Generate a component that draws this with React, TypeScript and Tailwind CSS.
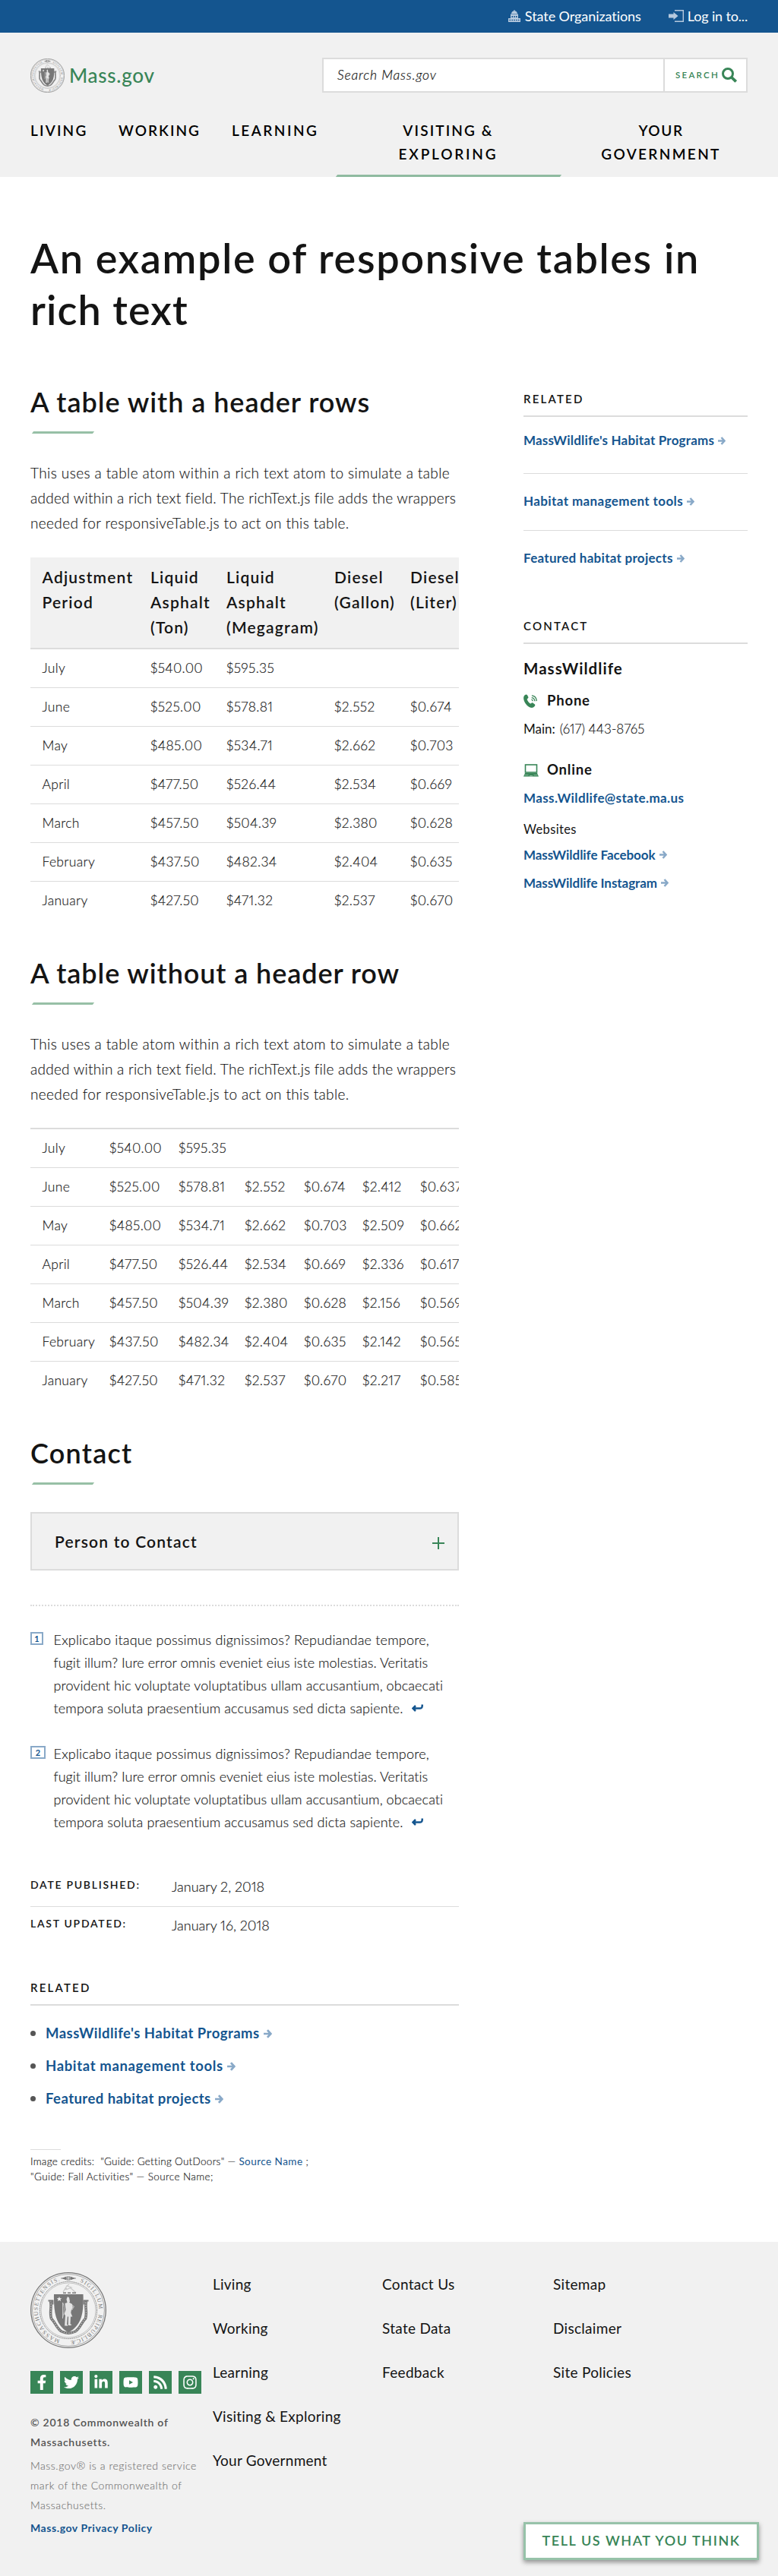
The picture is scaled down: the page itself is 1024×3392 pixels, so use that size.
import type { ReactNode } from 'react';
import { FaFacebookF, FaTwitter, FaLinkedinIn, FaYoutube, FaRss, FaInstagram } from 'react-icons/fa';

/* ---------- icons ---------- */

function Seal({ className, id }: { className: string; id: string }) {
  return (
    <svg viewBox="0 0 100 100" className={className} fill="none" stroke="#777">
      <defs>
        <path id={id} d="M50 90.3A40.3 40.3 0 0 1 50 9.7A40.3 40.3 0 0 1 50 90.3" />
      </defs>
      <circle cx="50" cy="50" r="49.3" strokeWidth="1.3" />
      <circle cx="50" cy="50" r="47.4" strokeWidth="0.6" />
      <circle cx="50" cy="50" r="37.6" strokeWidth="1" strokeDasharray="1 0.6" />
      <circle cx="50" cy="50" r="36" strokeWidth="0.4" />
      <g fill="#777" stroke="none" className="font-['Liberation_Serif'] text-[7.6px]">
        <text>
          <textPath href={`#${id}`} startOffset="11" textLength="104" lengthAdjust="spacing">MASSACHUSETTENSIS.</textPath>
        </text>
        <text>
          <textPath href={`#${id}`} startOffset="142" textLength="46" lengthAdjust="spacing">SIGILLUM</textPath>
        </text>
        <text>
          <textPath href={`#${id}`} startOffset="195" textLength="55" lengthAdjust="spacing">REIPUBLICÆ</textPath>
        </text>
        <path d="M41 8l6-2.2v4.4zM59 8l-6-2.2v4.4z" />
      </g>
      <rect x="48" y="6" width="4" height="4" strokeWidth="1" />
      <path d="M40 8h20" strokeWidth="0.8" />
      <g stroke="#c9c9c9" strokeWidth="1.2">
        <path d="M43 26l5-8 6 2-7 3M48 18l3-2M52 20l8 7M44 24l4-3" />
      </g>
      <path d="M43 27.2h4M49 27.2h4M55 27.2h5" strokeWidth="1.4" />
      <path d="M31 29h38.500c1 26-2.500 41-19.500 50.500C34 70 30.500 55 31 29z" fill="#777" stroke="none" />
      <path d="M26.500 38c2 8-1.500 14 1 23 6 6 7 13 13.500 17 6 3 12 3 18 0 6.500-4 7.500-11 13.500-17 2.500-9-1-15 1-23" strokeWidth="3.600" />
      <path d="M26.500 38c2 8-1.500 14 1 23 6 6 7 13 13.500 17 6 3 12 3 18 0 6.500-4 7.500-11 13.500-17 2.500-9-1-15 1-23" stroke="#c4c4c4" strokeWidth="1.200" strokeDasharray="1.400 1.800" />
      <path d="M23.500 37.500h6v5M76.500 37.500h-6v5" strokeWidth="1.800" />
      <path d="M38 32l.9 2.200 2.400.1-1.900 1.500.7 2.400-2.100-1.400-2.100 1.400.7-2.400-1.900-1.500 2.400-.1z" fill="#f1f1f1" stroke="none" />
      <g fill="#e4e4e4" stroke="none">
        <path d="M47.500 35.500l1.500-3.500 2 1.500 1 5-1 1.500h-2.500zM45.500 41l3-1h3l3.500 2 .8 4.500-2 3.500-.5 3.500 2 5h-2.300l-.5 10h1.300v1.500h-4v-1.500l.3-10h-1.300l-.8 10.500h1v1.500h-3.800v-1.500l.8-12-1.500-2 2-5.500z" />
      </g>
      <path d="M42.500 40v21M42.500 40c3 5 2 12 0 20M54 43l3.500 2-3 5" stroke="#d8d8d8" strokeWidth="0.800" />
    </svg>
  );
}

function CapitolIcon() {
  return (
    <svg viewBox="0 0 16 16" className="h-4 w-4" fill="#b5c9de">
      <path d="M7.500 0h1v1.300c2 .4 3.300 2 3.500 3.700H4c.2-1.700 1.500-3.300 3.500-3.700zM3 5.500h10V7H3zM0 11h16v5H0z" />
      <path d="M3 7h10v4H3z" />
      <path d="M4.500 8h1.500v2H4.500zM7.300 8h1.500v2H7.300zM10 8h1.500v2H10zM1.500 12.700H3v1.600H1.500zM4.400 12.700h1.500v1.600H4.400zM7.300 12.700h1.500v1.600H7.300zM10.200 12.700h1.500v1.600h-1.500zM13 12.700h1.500v1.600H13z" fill="#14558f" />
    </svg>
  );
}

function LoginIcon() {
  return (
    <svg viewBox="0 0 20 16" className="h-4 w-5" fill="none">
      <path d="M8 .7h11.300v14.600H8" stroke="#b5c9de" strokeWidth="1.400" />
      <path d="M0 5.500h6.500V3l6 5-6 5v-2.500H0z" fill="#b5c9de" />
    </svg>
  );
}

function Magnifier() {
  return (
    <svg viewBox="0 0 20 20" className="h-5 w-5" fill="none" stroke="#388557">
      <circle cx="8" cy="8" r="6.500" strokeWidth="3" />
      <path d="M12.500 12.500l6.200 6" strokeWidth="3.800" />
    </svg>
  );
}

function PhoneIcon() {
  return (
    <svg viewBox="0 0 18 19" className="h-[19px] w-[18px]" fill="#388557">
      <path d="M1.800 1.200C3 .2 4.300.2 5 1.200l1.300 2.500c.4 1-.1 1.700-1.100 2.400-.6.500-.5 1-.2 1.700.8 1.800 2 3.300 3.600 4.400.6.4 1.100.4 1.600-.1.800-.8 1.500-1 2.400-.4l2 1.500c1 .8.900 1.700 0 2.900-1.500 2-3.600 2.500-6 1.500C4.700 15.900.8 11.100.2 6.300 0 4.200.3 2.400 1.800 1.200z" />
      <g fill="none" stroke="#388557" strokeWidth="1.300">
        <path d="M10.500 7.200c1.100.3 1.700 1 1.800 2.100M10.700 4.600c2.500.4 4 2 4.200 4.600M10.900 1.900c4 .5 6.200 3.100 6.400 7.200" />
      </g>
    </svg>
  );
}

function LaptopIcon() {
  return (
    <svg viewBox="0 0 20 17" className="h-[17px] w-5">
      <rect x="2.500" y="1" width="15" height="10" fill="none" stroke="#388557" strokeWidth="1.600" />
      <path d="M2 12h16l2 4.600H0z" fill="#388557" />
      <path d="M1.500 14.600h5M13.500 14.600h5M8 15.500h4" stroke="#9fc7ae" strokeWidth="0.800" />
    </svg>
  );
}

function Arrow({ className = 'h-[11px] w-[10px]' }: { className?: string }) {
  return (
    <svg viewBox="0 0 10 11" className={`ml-[5px] shrink-0 ${className}`} fill="none" stroke="#89a9c8" strokeWidth="2.500">
      <path d="M0 5.500h8M4.500 1l4 4.500-4 4.500" />
    </svg>
  );
}

function ReturnArrow() {
  return (
    <svg viewBox="0 0 15 10" className="ml-[11px] h-[10px] w-[15px]" fill="none" stroke="#14558f" strokeWidth="2.500">
      <path d="M1.500 5.500h9.500c2 0 3-1.500 2.700-5M5 2L1.500 5.500 5 9" />
    </svg>
  );
}

/* ---------- shared pieces ---------- */

function SectionHeading({ children, className }: { children: ReactNode; className: string }) {
  return (
    <div>
      <h2 className={`h-11 whitespace-nowrap text-[36px] font-semibold leading-[44px] ${className}`}>{children}</h2>
      <div className="ml-[3px] mt-[17px] h-[3px] w-20 -skew-x-[35deg] bg-[#97c0a6]" />
    </div>
  );
}

function Intro() {
  return (
    <p className="mt-[35px] whitespace-nowrap text-[19px] font-light leading-[33px] [-webkit-text-stroke:0.15px]">
      <span className="block tracking-[0.41px]">This uses a table atom within a rich text atom to simulate a table</span>
      <span className="block tracking-[0.25px]">added within a rich text field. The richText.js file adds the wrappers</span>
      <span className="block tracking-[0.36px]">needed for responsiveTable.js to act on this table.</span>
    </p>
  );
}

function SmallHeading({ children }: { children: ReactNode }) {
  return (
    <h3 className="h-[34px] border-b-2 border-[#dcdcdc] text-[15px] font-semibold uppercase leading-5 tracking-[2.2px]">{children}</h3>
  );
}

const headers = [['Adjustment', 'Period'], ['Liquid', 'Asphalt', '(Ton)'], ['Liquid', 'Asphalt', '(Megagram)'], ['Diesel', '(Gallon)'], ['Diesel', '(Liter)']];

const prices = [
  ['July', '$540.00', '$595.35', '', '', '', ''],
  ['June', '$525.00', '$578.81', '$2.552', '$0.674', '$2.412', '$0.637'],
  ['May', '$485.00', '$534.71', '$2.662', '$0.703', '$2.509', '$0.662'],
  ['April', '$477.50', '$526.44', '$2.534', '$0.669', '$2.336', '$0.617'],
  ['March', '$457.50', '$504.39', '$2.380', '$0.628', '$2.156', '$0.569'],
  ['February', '$437.50', '$482.34', '$2.404', '$0.635', '$2.142', '$0.565'],
  ['January', '$427.50', '$471.32', '$2.537', '$0.670', '$2.217', '$0.585'],
];

function PriceRows({ columns }: { columns: number }) {
  return (
    <tbody className="text-[17.5px] font-light leading-6 tracking-[0.3px] proportional-nums [-webkit-text-stroke:0.15px]">
      {prices.map((row) => (
        <tr key={row[0]} className="group">
          {row.slice(0, columns).map((cell, i) => (
            <td key={i} className="h-[51px] border-b border-[#dcdcdc] p-0 pb-px first:pl-[15.5px] group-last:border-transparent">{cell}</td>
          ))}
        </tr>
      ))}
    </tbody>
  );
}

function Footnote({ n, className }: { n: number; className: string }) {
  return (
    <li className="flex">
      <div className="w-[30.5px] shrink-0 pt-[5px]">
        <span className={`flex h-[17px] items-center justify-center border-2 border-[#89a9c8] text-[11px] font-bold leading-none text-[#14558f] ${className}`}>{n}</span>
      </div>
      <p className="whitespace-nowrap text-[18px] font-light leading-[30px] [-webkit-text-stroke:0.15px]">
        <span className="block tracking-[0.19px]">Explicabo itaque possimus dignissimos? Repudiandae tempore,</span>
        <span className="block tracking-[0.04px]">fugit illum? Iure error omnis eveniet eius iste molestias. Veritatis</span>
        <span className="block tracking-[0.08px]">provident hic voluptate voluptatibus ullam accusantium, obcaecati</span>
        <span className="flex items-center tracking-[0.12px]">tempora soluta praesentium accusamus sed dicta sapiente.<ReturnArrow /></span>
      </p>
    </li>
  );
}

const socials = [FaFacebookF, FaTwitter, FaLinkedinIn, FaYoutube, FaRss, FaInstagram];

/* ---------- page ---------- */

export default function App() {
  return (
    <div className="relative h-[3392px] w-[1024px] overflow-hidden bg-white font-['Lato',sans-serif] text-[#141414]">
      <div className="flex h-[43px] items-center justify-end bg-[#14558f] pb-px text-[18px] text-white">
        <CapitolIcon />
        <span className="ml-1.5 w-[189px] whitespace-nowrap tracking-[-0.07px]">State Organizations</span>
        <LoginIcon />
        <span className="ml-[5px] mr-10 whitespace-nowrap tracking-[-0.16px]">Log in to...</span>
      </div>

      <header className="h-[190px] bg-[#f1f1f1] px-10 pt-[33px]">
        <div className="flex h-[46px] items-center justify-between">
          <div className="flex items-center gap-1.5 text-[26px] font-medium tracking-[0.73px] text-[#388557]">
            <Seal className="h-[45px] w-[45px]" id="seal-header" />
            <span>Mass.gov</span>
          </div>
          <div className="flex h-[46px] w-[560px] border-2 border-[#dcdcdc] bg-white">
            <div className="flex flex-1 items-center pl-[18px] text-[17.5px] font-light italic tracking-[0.85px] [-webkit-text-stroke:0.2px]">Search Mass.gov</div>
            <div className="flex w-[109px] items-center border-l-2 border-[#dcdcdc] pl-3.5 text-[11.5px] font-semibold tracking-[2.27px] text-[#388557]">
              SEARCH
              <span className="ml-[3px]"><Magnifier /></span>
            </div>
          </div>
        </div>
        <nav className="mt-[34px] grid h-[77px] grid-cols-[116px_149px_137px_296px_246px] text-[19px] font-semibold uppercase leading-[31px] text-black">
          <a className="tracking-[2.2px]">Living</a>
          <a className="tracking-[2.05px]">Working</a>
          <a className="tracking-[2.5px]">Learning</a>
          <a className="flex h-[77px] flex-col items-center justify-between text-center">
            <span>
              <span className="block tracking-[2.13px]">Visiting &amp;</span>
              <span className="block tracking-[2.8px]">Exploring</span>
            </span>
            <span className="h-[3px] w-[295px] -skew-x-[35deg] bg-[#8fbaa0]" />
          </a>
          <a className="pl-[18px] text-center">
            <span className="block tracking-[1.61px]">Your</span>
            <span className="block tracking-[2.35px]">Government</span>
          </a>
        </nav>
      </header>

      <h1 className="ml-10 mt-[73px] h-[136px] whitespace-nowrap text-[54px] font-semibold leading-[68px]">
        <span className="block tracking-[1.64px]">An example of responsive tables in</span>
        <span className="block tracking-[1.08px]">rich text</span>
      </h1>

      <div className="mx-10 flex justify-between">
        <main className="w-[564px] pt-[65px]">
          <SectionHeading className="tracking-[0.95px]">A table with a header rows</SectionHeading>
          <Intro />
          <div className="mt-[29px] h-[478px] overflow-hidden">
            <table className="w-[642px] table-fixed border-separate border-spacing-0">
              <colgroup>
                <col className="w-[158px]" /><col className="w-[100px]" /><col className="w-[142px]" /><col className="w-[100px]" /><col className="w-[142px]" />
              </colgroup>
              <thead>
                <tr className="bg-[#f1f1f1] text-left align-top text-[21px] leading-[33px] tracking-[1.2px]">
                  {headers.map((lines, i) => (
                    <th key={i} className="h-[121px] border-b-2 border-[#dcdcdc] p-0 pt-[9px] font-semibold first:pl-[15.5px]">
                      {lines.map((line) => (
                        <span key={line} className="block">{line}</span>
                      ))}
                    </th>
                  ))}
                </tr>
              </thead>
              <PriceRows columns={5} />
            </table>
          </div>

          <div className="h-[47px]" />
          <SectionHeading className="tracking-[0.9px]">A table without a header row</SectionHeading>
          <Intro />
          <div className="mt-[28px] h-[359px] overflow-hidden border-t-2 border-[#dcdcdc]">
            <table className="w-[589px] table-fixed border-separate border-spacing-0">
              <colgroup>
                <col className="w-[104px]" /><col className="w-[91px]" /><col className="w-[87px]" /><col className="w-[78px]" /><col className="w-[77px]" /><col className="w-[76px]" /><col className="w-[76px]" />
              </colgroup>
              <PriceRows columns={7} />
            </table>
          </div>

          <div className="h-[47px]" />
          <SectionHeading className="tracking-[1.24px]">Contact</SectionHeading>
          <div className="mt-9 flex h-[77px] items-center justify-between border-2 border-[#dcdcdc] bg-[#f1f1f1] pl-[30px] pr-[17px]">
            <span className="text-[21px] font-semibold tracking-[1.2px]">Person to Contact</span>
            <svg viewBox="0 0 16 16" className="mt-1 h-4 w-4" stroke="#388557" strokeWidth="2"><path d="M8 0v16M0 8h16" /></svg>
          </div>
          <div className="mt-[45px] border-t-2 border-dotted border-[#dcdcdc]" />
          <ol className="mt-[29px] flex flex-col gap-[30px]">
            <Footnote n={1} className="w-[17px]" />
            <Footnote n={2} className="w-[20px]" />
          </ol>

          <dl className="mt-[46px]">
            <div className="flex h-[51px] border-b border-[#dcdcdc] pt-3">
              <dt className="w-[186px] text-[14px] font-semibold uppercase leading-5 tracking-[1.73px]">Date Published:</dt>
              <dd className="text-[18px] font-light leading-6 proportional-nums [-webkit-text-stroke:0.15px]">January 2, 2018</dd>
            </div>
            <div className="flex h-[51px] pt-3">
              <dt className="w-[186px] text-[14px] font-semibold uppercase leading-5 tracking-[1.73px]">Last Updated:</dt>
              <dd className="text-[18px] font-light leading-6 proportional-nums [-webkit-text-stroke:0.15px]">January 16, 2018</dd>
            </div>
          </dl>

          <section className="mt-[45px]">
            <SmallHeading>Related</SmallHeading>
            <ul className="mt-[15px] text-[18.5px] font-bold leading-[43px] text-[#14558f]">
              <li className="flex items-center tracking-[0.48px]"><span className="mr-[13px] h-[7px] w-[7px] rounded-full bg-[#555]" />MassWildlife's Habitat Programs<Arrow className="h-3 w-[11px]" /></li>
              <li className="flex items-center tracking-[0.65px]"><span className="mr-[13px] h-[7px] w-[7px] rounded-full bg-[#555]" />Habitat management tools<Arrow className="h-3 w-[11px]" /></li>
              <li className="flex items-center tracking-[0.45px]"><span className="mr-[13px] h-[7px] w-[7px] rounded-full bg-[#555]" />Featured habitat projects<Arrow className="h-3 w-[11px]" /></li>
            </ul>
          </section>

          <div className="mt-[45px] h-px w-10 bg-[#dcdcdc]" />
          <p className="mt-[5px] whitespace-nowrap text-[13.5px] font-light leading-5 [-webkit-text-stroke:0.15px]">
            <span className="block tracking-[0.29px]">Image credits:&nbsp; "Guide: Getting OutDoors" — <b className="tracking-[0.46px] text-[#14558f] [-webkit-text-stroke:0px]">Source Name</b> ;</span>
            <span className="block tracking-[0.4px]">"Guide: Fall Activities" — Source Name;</span>
          </p>
        </main>

        <aside className="w-[295px] pt-[73px]">
          <SmallHeading>Related</SmallHeading>
          <ul className="text-[17px] font-bold leading-6 text-[#14558f]">
            <li className="flex h-[75px] border-b border-[#dcdcdc] pt-[19px] tracking-[0.19px]">MassWildlife's Habitat Programs<Arrow className="mt-[7px] h-[11px] w-[10px]" /></li>
            <li className="flex h-[75px] border-b border-[#dcdcdc] pt-6 tracking-[0.4px]">Habitat management tools<Arrow className="mt-[7px] h-[11px] w-[10px]" /></li>
            <li className="flex h-[115px] pt-6 tracking-[0.28px]">Featured habitat projects<Arrow className="mt-[7px] h-[11px] w-[10px]" /></li>
          </ul>
          <SmallHeading>Contact</SmallHeading>
          <h4 className="mt-[18px] text-[20.5px] font-bold leading-7 tracking-[1.05px]">MassWildlife</h4>
          <h5 className="mt-[17px] flex h-6 items-center gap-[13px] text-[18.5px] font-bold tracking-[0.8px]"><PhoneIcon />Phone</h5>
          <p className="mt-[12.5px] h-6 whitespace-nowrap text-[17px] font-light leading-6"><span className="mr-1.5 font-normal">Main:</span><span className="proportional-nums tracking-[0.1px] [-webkit-text-stroke:0.15px]">(617) 443-8765</span></p>
          <h5 className="mt-[30.5px] flex h-6 items-center gap-[11px] text-[18.5px] font-bold tracking-[0.8px]"><LaptopIcon />Online</h5>
          <a className="mt-[13px] block text-[17px] font-bold leading-6 tracking-[0.37px] text-[#14558f]">Mass.Wildlife@state.ma.us</a>
          <p className="mt-[17px] text-[16.5px] leading-6 tracking-[0.35px]">Websites</p>
          <a className="mt-[9.5px] flex items-center text-[17px] font-bold leading-6 tracking-[-0.05px] text-[#14558f]">MassWildlife Facebook<Arrow /></a>
          <a className="mt-[13px] flex items-center text-[17px] font-bold leading-6 tracking-[-0.05px] text-[#14558f]">MassWildlife Instagram<Arrow /></a>
        </aside>
      </div>

      <footer className="absolute inset-x-0 bottom-0 flex h-[440px] bg-[#f1f1f1] pl-10">
        <div className="w-[240px] pt-10 text-[14px] leading-[26px]">
          <Seal className="h-[100px] w-[100px]" id="seal-footer" />
          <div className="mt-[30px] flex gap-[9px]">
            {socials.map((Icon, i) => (
              <span key={i} className="flex h-[30px] w-[30px] items-center justify-center bg-[#388557] text-[20px] text-white"><Icon /></span>
            ))}
          </div>
          <p className="mt-[25px] whitespace-nowrap font-semibold tracking-[0.74px] text-[#535353]">© 2018 Commonwealth of<br />Massachusetts.</p>
          <p className="mt-[5px] whitespace-nowrap font-light tracking-[0.55px] text-[#707070] [-webkit-text-stroke:0.1px]">Mass.gov® is a registered service<br />mark of the Commonwealth of<br />Massachusetts.</p>
          <p className="mt-1 font-bold tracking-[0.57px] text-[#14558f]">Mass.gov Privacy Policy</p>
        </div>
        <div className="grid grid-cols-[223px_225px_200px] pt-[27px] text-[19px] leading-[58px]">
          <div className="tracking-[0.25px]"><p>Living</p><p>Working</p><p>Learning</p><p>Visiting &amp; Exploring</p><p>Your Government</p></div>
          <div className="tracking-[0.3px]"><p>Contact Us</p><p>State Data</p><p>Feedback</p></div>
          <div className="tracking-[0.3px]"><p>Sitemap</p><p>Disclaimer</p><p>Site Policies</p></div>
        </div>
        <button className="absolute bottom-[21px] right-[25px] h-[50px] w-[310px] whitespace-nowrap border-[3px] border-[#97c2a9] bg-white pb-0.5 text-[18px] font-semibold tracking-[1.55px] text-[#388557] shadow-[0_3px_6px_rgba(0,0,0,0.4)]">
          TELL US WHAT YOU THINK
        </button>
      </footer>
    </div>
  );
}
